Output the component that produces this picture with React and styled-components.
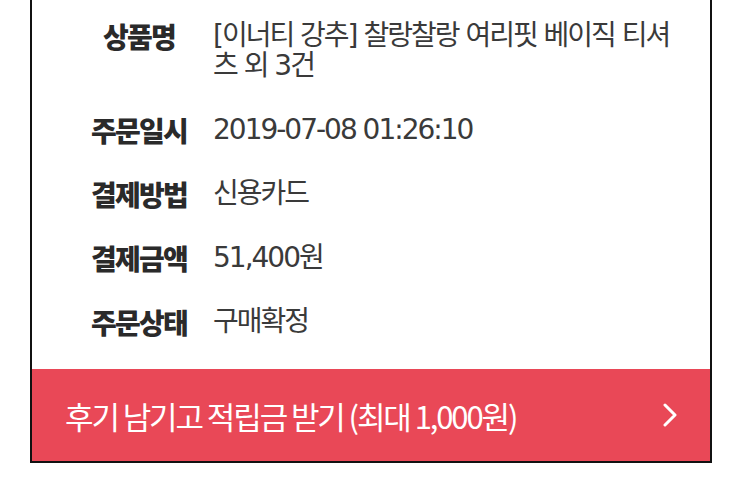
import React from "react";
import styled, { createGlobalStyle } from "styled-components";

const Global = createGlobalStyle`
  html, body { margin: 0; padding: 0; background: #ffffff; }
  body { font-family: "Noto Sans CJK KR", "Noto Sans", sans-serif; }
`;

const Page = styled.div`
  padding: 0 31px 0 30px;
`;

const Card = styled.div`
  border: 2px solid #111;
  border-top: none;
  background: #fff;
`;

const List = styled.div`
  display: flex;
  flex-direction: column;
  gap: 34px;
  padding: 21px 22px 32px 50px;
`;

const Row = styled.div`
  display: grid;
  grid-template-columns: 114px 1fr;
  column-gap: 17px;
  align-items: start;
`;

const Label = styled.div`
  font-family: "Noto Sans CJK KR", sans-serif;
  font-size: 28px;
  line-height: 30px;
  font-weight: 900;
  color: #2a2a2a;
  text-align: center;
  letter-spacing: -1.8px;
  white-space: nowrap;
`;

const Value = styled.div`
  font-family: "DejaVu Sans", "Noto Sans CJK KR", sans-serif;
  font-size: 28px;
  line-height: 30px;
  font-weight: 400;
  color: #3a3a3a;
  letter-spacing: -2px;
  word-break: normal;
  line-break: anywhere;
`;

const ReviewBar = styled.div`
  display: flex;
  align-items: center;
  justify-content: space-between;
  height: 92px;
  padding: 0 32px 0 33px;
  background: #e94857;
  color: #fff;
  font-family: "Noto Sans CJK KR", sans-serif;
  font-size: 31px;
  letter-spacing: -2.1px;
`;

const Chevron = () => (
  <svg width="16" height="24" viewBox="0 0 16 24">
    <polyline points="3,2 13,12 3,22" fill="none" stroke="#fff" strokeWidth="3" strokeLinecap="round" strokeLinejoin="round" />
  </svg>
);

const rows = [
  ["상품명", "[이너티 강추] 찰랑찰랑 여리핏 베이직 티셔츠 외 3건"],
  ["주문일시", "2019-07-08 01:26:10"],
  ["결제방법", "신용카드"],
  ["결제금액", "51,400원"],
  ["주문상태", "구매확정"],
];

export default function App() {
  return (
    <>
      <Global />
      <Page>
        <Card>
          <List>
            {rows.map(([k, v]) => (
              <Row key={k}>
                <Label>{k}</Label>
                <Value>{v}</Value>
              </Row>
            ))}
          </List>
          <ReviewBar>
            <span>후기 남기고 적립금 받기 (최대 1,000원)</span>
            <Chevron />
          </ReviewBar>
        </Card>
      </Page>
    </>
  );
}
